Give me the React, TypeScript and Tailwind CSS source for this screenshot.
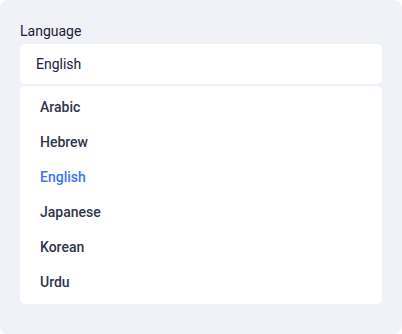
const LANGUAGES = ["Arabic", "Hebrew", "English", "Japanese", "Korean", "Urdu"];

export default function App() {
  const selected = "English";

  return (
    <div className="w-[402px] h-[334px] bg-white" style={{ fontFamily: "Roboto, 'Noto Sans', sans-serif" }}>
      <div className="h-full rounded-[8px] bg-[#f1f2f7] px-[20px] pt-[21px]">
        <p className="text-[14px] leading-[20px] text-[#1c2035] mb-[3px]">Language</p>

        {/* Select box */}
        <div className="h-[40px] rounded-[5px] bg-white px-[16px] flex items-center text-[14px] text-[#1c2035]">
          {selected}
        </div>

        {/* Options list */}
        <div className="mt-[2px] rounded-[5px] bg-white py-[4px]">
          {LANGUAGES.map((lang) => (
            <div
              key={lang}
              className={`h-[35px] px-[20px] flex items-center text-[14px] font-medium ${
                lang === selected ? "text-[#3d74f5]" : "text-[#30354a]"
              }`}
            >
              {lang}
            </div>
          ))}
        </div>
      </div>
    </div>
  );
}
